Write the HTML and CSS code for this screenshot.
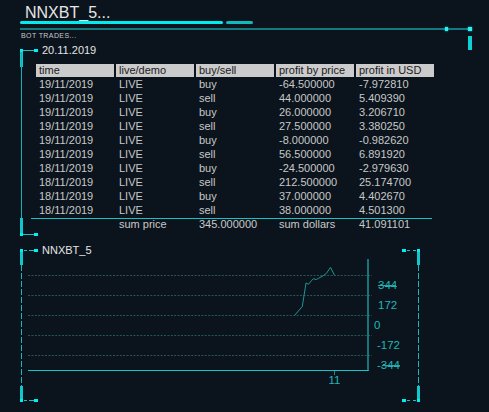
FILE: index.html
```
<!DOCTYPE html>
<html>
<head>
<meta charset="utf-8">
<link rel="stylesheet" href="styles.css">
</head>
<body>
<div class="top">
  <div class="title">NNXBT_5...</div>
  <div class="bars"><span class="bar bar-main"></span><span class="bar bar-sub"></span></div>
  <div class="rule"><span class="dot dot-a"></span><span class="dot dot-b"></span></div>
  <div class="sub">BOT TRADES...</div>
  <span class="vbar"></span>
</div>

<section class="panel trades">
  <i class="orn sq tl-sq"></i><i class="orn link tl-link"></i><i class="orn sq end tl-end"></i>
  <i class="orn thick l-top"></i><i class="orn thin l-thin"></i><i class="orn thick l-bot"></i>
  <i class="orn sq bl-sq"></i><i class="orn link bl-link"></i><i class="orn sq end bl-end"></i>

  <div class="panel-title">20.11.2019</div>
  <div class="grid">
    <div class="h">time</div><div class="h">live/demo</div><div class="h">buy/sell</div><div class="h">profit by price</div><div class="h">profit in USD</div>
    <div>19/11/2019</div><div>LIVE</div><div>buy</div><div>-64.500000</div><div>-7.972810</div>
    <div>19/11/2019</div><div>LIVE</div><div>sell</div><div>44.000000</div><div>5.409390</div>
    <div>19/11/2019</div><div>LIVE</div><div>buy</div><div>26.000000</div><div>3.206710</div>
    <div>19/11/2019</div><div>LIVE</div><div>sell</div><div>27.500000</div><div>3.380250</div>
    <div>19/11/2019</div><div>LIVE</div><div>buy</div><div>-8.000000</div><div>-0.982620</div>
    <div>19/11/2019</div><div>LIVE</div><div>sell</div><div>56.500000</div><div>6.891920</div>
    <div>18/11/2019</div><div>LIVE</div><div>buy</div><div>-24.500000</div><div>-2.979630</div>
    <div>18/11/2019</div><div>LIVE</div><div>sell</div><div>212.500000</div><div>25.174700</div>
    <div>18/11/2019</div><div>LIVE</div><div>buy</div><div>37.000000</div><div>4.402670</div>
    <div>18/11/2019</div><div>LIVE</div><div>sell</div><div>38.000000</div><div>4.501300</div>
  </div>
  <div class="sum-line"></div>
  <div class="grid sum">
    <div></div><div>sum price</div><div>345.000000</div><div>sum dollars</div><div>41.091101</div>
  </div>
</section>

<section class="panel chart">
  <i class="orn sq tl-sq"></i><i class="orn dlink tl-link"></i><i class="orn sq end tl-end"></i>
  <i class="orn thick l-top2"></i><i class="orn dashv l-dash"></i><i class="orn thick l-bot2"></i>
  <i class="orn sq bl-sq"></i><i class="orn dlink bl-link"></i><i class="orn sq end bl-end"></i>
  <i class="orn sq tr-sq"></i><i class="orn dlink-r tr-link"></i><i class="orn sq end tr-end"></i>
  <i class="orn thick r-top2"></i><i class="orn dashv r-dash"></i><i class="orn thick r-bot2"></i>
  <i class="orn sq br-sq"></i><i class="orn dlink-r br-link"></i><i class="orn sq end br-end"></i>

  <div class="panel-title">NNXBT_5</div>
  <svg class="plot" width="380" height="135" viewBox="0 0 380 135">
    <g class="gridlines">
      <line x1="8" y1="18.5" x2="352" y2="18.5"/>
      <line x1="8" y1="38.5" x2="352" y2="38.5"/>
      <line x1="8" y1="58.5" x2="352" y2="58.5"/>
      <line x1="8" y1="78.5" x2="352" y2="78.5"/>
      <line x1="8" y1="98.5" x2="352" y2="98.5"/>
    </g>
    <polyline class="series" points="274.5,58.5 282.3,49.5 286,26 288.5,27.3 291.7,23.3 293.5,21.8 296.5,22.5 298.5,21.3 303.3,18.7 306.5,16.3 310.5,10.3 314.5,18.3"/>
    <line class="yaxis" x1="348" y1="2" x2="348" y2="114"/>
    <line class="xaxis" x1="8" y1="113.5" x2="348.7" y2="113.5"/>
    <line class="tick" x1="314.5" y1="114" x2="314.5" y2="118"/>
    <text class="lbl" x="358" y="32">344</text>
    <text class="lbl" x="358" y="52">172</text>
    <text class="lbl" x="354" y="72">0</text>
    <text class="lbl" x="357" y="92">-172</text>
    <text class="lbl" x="357" y="112">-344</text>
    <line class="strike" x1="358" y1="28.5" x2="376" y2="28.5"/>
    <line class="strike" x1="362" y1="108.5" x2="380" y2="108.5"/>
    <text class="lbl" x="314.5" y="127" text-anchor="middle">11</text>
  </svg>
</section>
</body>
</html>
```

FILE: styles.css
```
html, body {
  margin: 0;
  padding: 0;
  background: #0b141d;
}
body {
  font-family: "Liberation Sans", Arial, sans-serif;
  width: 489px;
  height: 412px;
  overflow: hidden;
}

/* ---------- top header ---------- */
.top {
  position: relative;
  margin-left: 20px;
  width: 452px;
}
.title {
  margin-top: 4px;
  padding-left: 5px;
  font-size: 16px;
  line-height: 17px;
  color: #e6e6e6;
}
.bars {
  display: flex;
  gap: 3px;
  height: 3px;
}
.bar {
  display: block;
  height: 3px;
  border-radius: 2px;
}
.bar-main {
  width: 203px;
  background: #00edf0;
}
.bar-sub {
  width: 27px;
  background: #12b9bc;
}
.rule {
  position: relative;
  margin-top: 4px;
  height: 2px;
  background: #127a7e;
}
.dot {
  position: absolute;
  top: -1px;
  height: 4px;
  background: #2ff0f0;
  box-shadow: 0 0 2px #00e0e6;
}
.dot-a { left: 425px; width: 3px; }
.dot-b { left: 448px; width: 4px; }
.sub {
  margin-top: 2px;
  padding-left: 1px;
  font-size: 7px;
  line-height: 7px;
  letter-spacing: 0.4px;
  color: #c8c8c8;
}
.vbar {
  position: absolute;
  left: 448px;
  top: 32px;
  width: 4px;
  height: 14px;
  background: #0fd0d3;
}

/* ---------- panels ---------- */
.panel {
  position: relative;
  margin-left: 20px;
  width: 400px;
}
.trades {
  margin-top: 5px;
  padding-bottom: 6px;
}
.chart {
  margin-top: 8px;
  padding-bottom: 10px;
}
.panel-title {
  padding-left: 22px;
  font-size: 11px;
  line-height: 13px;
  color: #e4e4e4;
}

/* ---------- ornaments ---------- */
.orn {
  position: absolute;
  display: block;
}
.sq {
  width: 3px;
  height: 3px;
  background: #00f0f2;
}
.sq.end { width: 4px; }
.link {
  height: 1px;
  width: 11px;
  background: #16c0c4;
}
.dlink {
  height: 1px;
  width: 11px;
  background: linear-gradient(90deg, transparent 0 1px, #16c0c4 1px 4px, transparent 4px 6px, #16c0c4 6px 11px);
}
.dlink-r {
  height: 1px;
  width: 11px;
  background: linear-gradient(90deg, transparent 0 1px, #16c0c4 1px 4px, transparent 4px 7px, #16c0c4 7px 10px, transparent 10px 11px);
}
.thick {
  width: 3px;
  background: #0ec8cb;
}
.thin {
  width: 1px;
  background: #14b2b6;
}
.dashv {
  width: 1px;
  background: repeating-linear-gradient(180deg, #14b8bc 0 6px, transparent 6px 8px);
}

.tl-sq { left: 0; top: 5px; }
.tl-link { left: 3px; top: 6px; }
.tl-end { left: 14px; top: 5px; }
.bl-sq { left: 0; bottom: 0; }
.bl-link { left: 3px; bottom: 1px; }
.bl-end { left: 14px; bottom: 0; }

.l-top { left: 0; top: 8px; height: 15px; }
.l-thin { left: 1px; top: 8px; bottom: 3px; }
.l-bot { left: 0; bottom: 3px; height: 15px; }

.l-top2 { left: 0; top: 8px; height: 13px; }
.l-dash { left: 1px; top: 21px; bottom: 16px; }
.l-bot2 { left: 0; bottom: 3px; height: 13px; }

.tr-sq { right: 0; top: 5px; }
.tr-link { right: 3px; top: 6px; }
.tr-end { right: 14px; top: 5px; }
.br-sq { right: 0; bottom: 0; }
.br-link { right: 3px; bottom: 1px; }
.br-end { right: 14px; bottom: 0; }
.r-top2 { right: 0; top: 8px; height: 13px; }
.r-dash { right: 1px; top: 21px; bottom: 16px; }
.r-bot2 { right: 0; bottom: 3px; height: 13px; }

/* ---------- table ---------- */
.grid {
  margin: 7px 0 0 16px;
  display: grid;
  grid-template-columns: repeat(5, 78px);
  column-gap: 2px;
  row-gap: 1px;
  grid-auto-rows: 13px;
  font-size: 11px;
  line-height: 13px;
  color: #c8c8c8;
}
.grid > div {
  padding-left: 3px;
  white-space: nowrap;
  overflow: hidden;
}
.grid .h {
  background: #cbcbcb;
  color: #1b1b1b;
}
.sum-line {
  margin: 1px 0 0 11px;
  width: 401px;
  height: 1px;
  background: #13c3c7;
}
.grid.sum {
  margin-top: -1px;
  grid-auto-rows: 12px;
  line-height: 12px;
}

/* ---------- chart ---------- */
.plot {
  display: block;
}
.gridlines line {
  stroke: #25585b;
  stroke-width: 1;
  stroke-dasharray: 2 1.4;
}
.series {
  fill: none;
  stroke: #1f9494;
  stroke-width: 1;
}
.yaxis {
  stroke: #178f93;
  stroke-width: 1.6;
}
.xaxis {
  stroke: #12c5c9;
  stroke-width: 1;
}
.tick {
  stroke: #2a8386;
  stroke-width: 1;
}
.strike {
  stroke: #1fa9ac;
  stroke-width: 1;
}
.lbl {
  font-family: "Liberation Sans", Arial, sans-serif;
  font-size: 11.5px;
  fill: #22b4b7;
}
```
